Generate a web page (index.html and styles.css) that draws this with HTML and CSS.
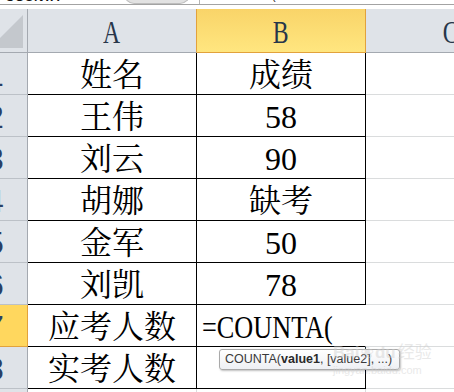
FILE: index.html
```html
<!DOCTYPE html>
<html lang="zh-CN">
<head>
<meta charset="utf-8">
<link rel="stylesheet" href="styles.css">
</head>
<body>
<div class="sheet">
  <div class="topbar">
    <div class="namebox"><span class="nb-text">COUNTA</span><span class="nb-btn"></span></div>
    <div class="fbar"><span class="fb-text">=COUNTA(</span></div>
  </div>
  <div class="hdr">
    <div class="corner"><svg width="23" height="34" viewBox="0 0 23 34"><polygon points="23,0 23,33 -10,33" fill="#c4c8cd"/></svg></div>
    <div class="ch pre-sel"><span class="narrow">A</span></div>
    <div class="ch sel"><span class="narrow">B</span></div>
    <div class="ch cc-h"><span class="narrow">C</span></div>
  </div>
  <div class="row"><div class="rh"><span class="num">1</span></div><div class="c">姓名</div><div class="c">成绩</div><div class="cc"></div></div>
  <div class="row"><div class="rh"><span class="num">2</span></div><div class="c">王伟</div><div class="c">58</div><div class="cc"></div></div>
  <div class="row"><div class="rh"><span class="num">3</span></div><div class="c">刘云</div><div class="c">90</div><div class="cc"></div></div>
  <div class="row"><div class="rh"><span class="num">4</span></div><div class="c">胡娜</div><div class="c">缺考</div><div class="cc"></div></div>
  <div class="row"><div class="rh"><span class="num">5</span></div><div class="c">金军</div><div class="c">50</div><div class="cc"></div></div>
  <div class="row"><div class="rh"><span class="num">6</span></div><div class="c">刘凯</div><div class="c">78</div><div class="cc"></div></div>
  <div class="row"><div class="rh rh-sel"><span class="num">7</span></div><div class="c">应考人数</div><div class="c edit"><span class="narrow formula">=COUNTA(</span></div><div class="cc"></div></div>
  <div class="row"><div class="rh"><span class="num">8</span></div><div class="c">实考人数</div><div class="c"></div><div class="cc"></div></div>
  <div class="row"><div class="rh"><span class="num">9</span></div><div class="c plain"></div><div class="c plain"></div><div class="cc"></div></div>

  <div class="tooltip">COUNTA(<b>value1</b>, [value2], ...)</div>
  <div class="watermark"><span class="wm-bai">Bai</span><span class="wm-paw">❀</span><span class="wm-du">du</span><span class="wm-cn">经验</span><div class="wm-url">jingyan.baidu.com</div></div>
</div>
</body>
</html>
```
FILE: styles.css
```css
* { box-sizing: border-box; }
body { margin: 0; background: #fff; }
.sheet {
  position: relative;
  width: 454px;
  height: 392px;
  overflow: hidden;
  background: #fff;
  font-family: "Liberation Serif", "Noto Serif CJK SC", "Noto Sans CJK SC", serif;
}
.topbar {
  display: flex;
  height: 5px;
  overflow: hidden;
  border-bottom: 1px solid #a3a3a3;
}
.namebox {
  width: 200px;
  flex: none;
  display: flex;
  align-items: flex-start;
  border-right: 1px solid #b5b5b5;
}
.nb-text {
  font: bold 13px/13px "Liberation Sans", sans-serif;
  color: #111;
  margin: -10px 0 0 5px;
}
.nb-btn {
  width: 66px;
  height: 10px;
  margin: -6px 0 0 64px;
  background: #e2e2e2;
  border: 1px solid #bdbdbd;
  border-radius: 0 0 12px 12px;
}
.fbar { flex: 1; display: flex; align-items: flex-start; }
.fb-text {
  font: 11px/11px "Liberation Sans", sans-serif;
  color: #111;
  margin: -9px 0 0 20px;
}
.hdr {
  display: flex;
  height: 44px;
  margin-top: 4px;
}
.corner {
  width: 28px;
  flex: none;
  background: #dfe3e8;
  border-right: 1px solid #a4a9b0;
  border-bottom: 1px solid #a4a9b0;
  display: flex;
  justify-content: flex-end;
  padding: 6px 4px 0 0;
}
.ch {
  width: 169px;
  flex: none;
  background: #dfe3e8;
  border-right: 1px solid #c1c5ca;
  border-bottom: 1px solid #a4a9b0;
  display: flex;
  justify-content: center;
  align-items: flex-end;
  font-size: 32px;
  line-height: 36px;
  color: #27364a;
  padding-bottom: 2px;
}
.ch.pre-sel { border-right-color: #e2a23c; }
.ch.sel {
  background: linear-gradient(#f9d469, #ffe67f);
  border-right-color: #e2a23c;
  border-bottom-color: #e2a23c;
}
.ch.cc-h { width: 170px; border-right: none; }
.narrow { display: inline-block; transform: scaleX(0.74); }
.row { display: flex; height: 42px; }
.rh {
  width: 28px;
  flex: none;
  background: #dfe3e8;
  border-right: 1px solid #a4a9b0;
  border-bottom: 1px solid #bcc1c7;
  overflow: hidden;
  display: flex;
  align-items: flex-end;
  padding-bottom: 1px;
}
.rh-sel {
  background: #ffd75e;
  border-bottom-color: #e2a23c;
  border-right-color: #e2a23c;
}
.num {
  font: 32px/36px "Liberation Sans", sans-serif;
  color: #2a3f66;
  margin-left: -14px;
}
.c {
  width: 169px;
  flex: none;
  border-right: 1px solid #000;
  border-bottom: 1px solid #000;
  display: flex;
  justify-content: center;
  align-items: flex-end;
  font-size: 32px;
  line-height: 36px;
  color: #000;
  padding-bottom: 1px;
  white-space: nowrap;
}
.c.plain { border-right-color: #dadcdd; border-bottom-color: #dadcdd; }
.c.edit {
  justify-content: flex-start;
  padding-left: 5px;
  border-right-color: transparent;
}
.formula { transform: scaleX(0.82); transform-origin: left bottom; }
.cc {
  width: 170px;
  flex: none;
  border-bottom: 1px solid #dadcdd;
}
.tooltip {
  position: absolute;
  left: 219px;
  top: 349px;
  width: 181px;
  height: 21px;
  border: 1px solid #a9a9a9;
  border-radius: 3px;
  background: linear-gradient(#ffffff, #eef0f4);
  box-shadow: 1px 1px 2px rgba(0, 0, 0, 0.25);
  font: 12.5px/19px "Liberation Sans", sans-serif;
  color: #3a3a3a;
  padding-left: 5px;
  white-space: nowrap;
}
.tooltip b { color: #2a2a2a; }
.watermark {
  position: absolute;
  left: 333px;
  top: 340px;
  width: 110px;
  color: #cfcfcf;
  opacity: 0.45;
  white-space: nowrap;
}
.wm-bai, .wm-du { font: bold 17px/22px "Liberation Sans", sans-serif; }
.wm-paw { font: 16px/22px "DejaVu Sans", sans-serif; margin: 0 1px; }
.wm-cn { font: 17px/22px "Noto Sans CJK SC", sans-serif; margin-left: 2px; }
.wm-url { font: 11px/12px "Liberation Sans", sans-serif; }
```
